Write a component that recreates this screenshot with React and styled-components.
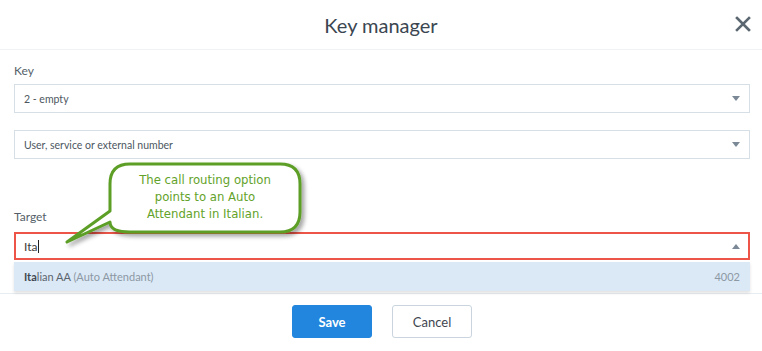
import React from 'react'
import styled, { createGlobalStyle } from 'styled-components'

const GlobalStyle = createGlobalStyle`
  html, body {
    margin: 0;
    padding: 0;
    background: #fff;
  }
  body {
    font-family: Lato, "Open Sans", sans-serif;
    color: #4a545e;
  }
`

const Modal = styled.div`
  width: 762px;
  height: 351px;
  background: #fff;
  position: relative;
  overflow: hidden;
`

const Header = styled.div`
  height: 49px;
  border-bottom: 1px solid #f0f3f6;
  display: flex;
  align-items: center;
  justify-content: center;
  position: relative;
`

const Title = styled.h1`
  margin: 0;
  font-size: 20px;
  font-weight: 400;
  color: #3b4651;
`

const Close = styled.button`
  position: absolute;
  right: 9px;
  top: 14px;
  width: 20px;
  height: 20px;
  padding: 0;
  border: 0;
  background: none;
  display: flex;
  align-items: center;
  justify-content: center;
`

const Body = styled.div`
  padding: 0 12px 0 14px;
  position: relative;
`

const Label = styled.div`
  font-size: 12px;
  line-height: 14px;
  color: #555f69;
  margin-top: ${p => p.$top}px;
  margin-bottom: ${p => p.$bottom}px;
`

const Select = styled.div`
  box-sizing: border-box;
  height: 29px;
  border: 1px solid #d6dee6;
  display: flex;
  align-items: center;
  justify-content: space-between;
  padding: 0 9px;
  font-size: 10.5px;
  color: #4d5761;
  margin-bottom: ${p => p.$bottom || 0}px;
`

const Input = styled(Select)`
  height: 28px;
  border: 2px solid #ec5548;
  padding: 0 8px;
  font-size: 12px;
  color: #3b3b3b;
`

const Caret = styled.span`
  display: inline-block;
  width: 1px;
  height: 13px;
  background: #222;
  vertical-align: -2px;
  margin-left: 1px;
`

const Arrow = styled.span`
  width: 0;
  height: 0;
  border-left: 4px solid transparent;
  border-right: 4px solid transparent;
  ${p => (p.$up ? 'border-bottom: 5px solid #7b8996;' : 'border-top: 5px solid #7b8996;')}
`

const Option = styled.div`
  box-sizing: border-box;
  height: 29px;
  margin-top: 2px;
  background: #dbe9f7;
  box-shadow: 0 2px 3px rgba(0, 0, 0, 0.12);
  display: flex;
  align-items: center;
  justify-content: space-between;
  padding: 0 10px;
  font-size: 11px;
  color: #5b646d;
  position: relative;
  z-index: 1;
`

const Match = styled.span`
  font-weight: 700;
  color: #3f4851;
`

const Muted = styled.span`
  color: #8c98a3;
`

const Footer = styled.div`
  margin-top: 2px;
  border-top: 1px solid #e8edf1;
  display: flex;
  justify-content: center;
  gap: 20px;
  padding-top: 11px;
  padding-left: 2px;
`

const Button = styled.button`
  box-sizing: border-box;
  width: 80px;
  height: 33px;
  border-radius: 3px;
  font-family: Lato, "Open Sans", sans-serif;
  font-size: 13px;
  border: 1px solid ${p => (p.$primary ? '#2286de' : '#c9d4df')};
  background: ${p => (p.$primary ? '#2286de' : '#fff')};
  color: ${p => (p.$primary ? '#fff' : '#3e4650')};
  font-weight: ${p => (p.$primary ? 700 : 400)};
`

const Callout = styled.div`
  position: absolute;
  left: 0;
  top: 0;
  width: 762px;
  height: 351px;
  pointer-events: none;
  z-index: 5;
`

const CalloutText = styled.div`
  position: absolute;
  left: 110px;
  top: 171px;
  width: 190px;
  text-align: center;
  font-family: "DejaVu Sans Condensed", "Liberation Sans Narrow", "DejaVu Sans", sans-serif;
  font-stretch: condensed;
  font-size: 13px;
  line-height: 17px;
  color: #63a22a;
`

export default function App() {
  return (
    <Modal>
      <GlobalStyle />
      <Header>
        <Title>Key manager</Title>
        <Close aria-label="Close">
          <svg width="16" height="16" viewBox="0 0 16 16">
            <path d="M2 2 L14 14 M14 2 L2 14" stroke="#5b6872" strokeWidth="2.6" strokeLinecap="square" />
          </svg>
        </Close>
      </Header>
      <Body>
        <Label $top={14} $bottom={6}>Key</Label>
        <Select $bottom={17}>
          <span>2 - empty</span>
          <Arrow />
        </Select>
        <Select>
          <span>User, service or external number</span>
          <Arrow />
        </Select>
        <Label $top={51} $bottom={8}>Target</Label>
        <Input>
          <span>Ita<Caret /></span>
          <Arrow $up />
        </Input>
        <Option>
          <span><Match>Ita</Match>lian AA <Muted>(Auto Attendant)</Muted></span>
          <Muted>4002</Muted>
        </Option>
      </Body>
      <Footer>
        <Button $primary>Save</Button>
        <Button>Cancel</Button>
      </Footer>
      <Callout>
        <svg width="762" height="351">
          <defs>
            <filter id="sh" x="-20%" y="-20%" width="140%" height="140%">
              <feDropShadow dx="3" dy="3" stdDeviation="2" floodColor="#000" floodOpacity="0.35" />
            </filter>
          </defs>
          <path
            d="M130 164 H280 Q300 164 300 184 V212 Q300 232 280 232 H130 Q110 232 110 222 L67 242 L110 211 V184 Q110 164 130 164 Z"
            fill="#fff"
            stroke="#5d9f27"
            strokeWidth="3"
            strokeLinejoin="round"
            filter="url(#sh)"
          />
        </svg>
        <CalloutText>
          The call routing option
          <br />
          points to an Auto
          <br />
          Attendant in Italian.
        </CalloutText>
      </Callout>
    </Modal>
  )
}
